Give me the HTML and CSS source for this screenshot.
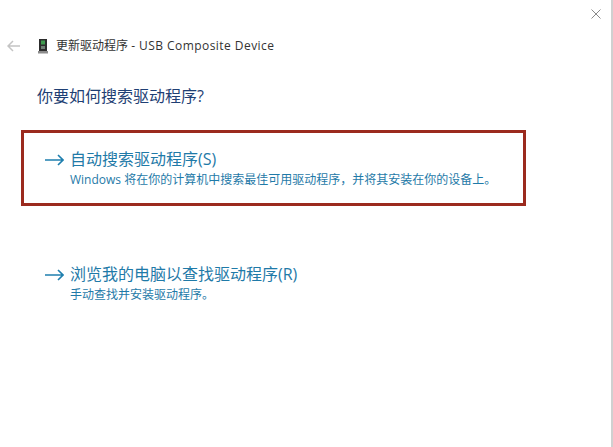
FILE: index.html
```html
<!DOCTYPE html>
<html lang="zh-CN">
<head>
<meta charset="utf-8">
<title>更新驱动程序</title>
<link rel="stylesheet" href="styles.css">
</head>
<body>
<div class="window">
  <div class="topbar">
    <svg class="close" width="10" height="10" viewBox="0 0 10 10"><path d="M.5.5l9 9M9.5.5l-9 9" stroke="#8a8a8a" stroke-width="1" fill="none"/></svg>
  </div>
  <div class="titlebar">
    <svg class="back" width="13" height="12" viewBox="0 0 13 12"><path d="M6 1L1 6l5 5M1 6h12" stroke="#c4c4c4" stroke-width="1.5" fill="none"/></svg>
    <svg class="device" width="10" height="15" viewBox="0 0 10 15"><rect x="1" y="0" width="8" height="12" fill="#2c2c2c"/><rect x="3" y="1.5" width="4" height="4" fill="#3f9a4e"/><rect x="3" y="7" width="4" height="3" fill="#6f7f74"/><rect x="0" y="12" width="10" height="2.5" fill="#8c8c8c"/></svg>
    <span class="title">更新驱动程序 <span class="title-latin">- USB Composite Device</span></span>
  </div>
  <h1 class="heading">你要如何搜索驱动程序?</h1>
  <div class="option selected">
    <svg class="arrow" width="19" height="12" viewBox="0 0 19 12"><path d="M13 1l5 5-5 5M18 6H0" stroke="#1f7fae" stroke-width="1.6" fill="none"/></svg>
    <div class="option-text">
      <div class="option-title">自动搜索驱动程序(S)</div>
      <div class="option-desc">Windows 将在你的计算机中搜索最佳可用驱动程序，并将其安装在你的设备上。</div>
    </div>
  </div>
  <div class="option second">
    <svg class="arrow" width="19" height="12" viewBox="0 0 19 12"><path d="M13 1l5 5-5 5M18 6H0" stroke="#1f7fae" stroke-width="1.6" fill="none"/></svg>
    <div class="option-text">
      <div class="option-title">浏览我的电脑以查找驱动程序(R)</div>
      <div class="option-desc">手动查找并安装驱动程序。</div>
    </div>
  </div>
</div>
</body>
</html>
```
FILE: styles.css
```css
html, body {
  margin: 0;
  padding: 0;
  background: #fff;
}
.window {
  width: 613px;
  height: 447px;
  box-sizing: border-box;
  border-right: 2px solid #d0d0d0;
  overflow: hidden;
  font-family: "Open Sans", "Noto Sans CJK SC", sans-serif;
}
.topbar {
  height: 9px;
  padding-top: 9px;
  display: flex;
  justify-content: flex-end;
  padding-right: 10px;
}
.close {
  display: block;
}
.titlebar {
  display: flex;
  align-items: center;
  height: 16px;
  margin-top: 20px;
  padding-left: 7px;
}
.back {
  margin-right: 18px;
}
.device {
  margin-right: 8px;
}
.title {
  font-size: 12px;
  line-height: 16px;
  color: #333;
  white-space: nowrap;
}
.title-latin {
  letter-spacing: 0.45px;
}
.heading {
  margin: 30px 0 0 37px;
  font-size: 16px;
  line-height: 24px;
  font-weight: 400;
  color: #1f3f74;
}
.option {
  display: flex;
  align-items: flex-start;
  box-sizing: border-box;
  width: 505px;
  height: 76px;
  margin-left: 21px;
  padding: 15px 0 0 21px;
  border: 3px solid transparent;
}
.selected {
  margin-top: 22px;
  border-color: #9b2a1e;
}
.second {
  margin-top: 39px;
}
.arrow {
  margin-top: 6px;
  margin-right: 6px;
  flex: none;
}
.option-title {
  font-size: 16px;
  line-height: 23px;
  color: #1f7aa8;
  white-space: nowrap;
}
.option-desc {
  font-size: 12px;
  line-height: 17px;
  color: #1f7aa8;
  white-space: nowrap;
}
```
